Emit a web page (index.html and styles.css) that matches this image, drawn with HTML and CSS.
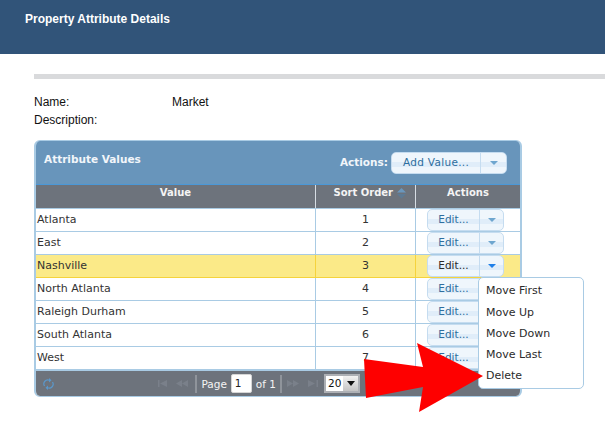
FILE: index.html
```html
<!DOCTYPE html>
<html lang="en">
<head>
  <meta charset="UTF-8">
  <title>Property Attribute Details</title>
  <link rel="stylesheet" href="styles.css">
</head>
<body>
  <!-- Header -->
  <header class="page-header">Property Attribute Details</header>

  <main class="content">
    <div class="divider"></div>

    <div class="field"><span class="field-label">Name:</span><span>Market</span></div>
    <div class="field"><span class="field-label">Description:</span></div>

    <!-- Grid -->
    <section class="panel">
      <div class="panel-title">
        <h2>Attribute Values</h2>
        <div class="panel-actions">
          <span>Actions:</span>
          <div class="split-btn add-btn"><span class="btn-main">Add Value...</span><span class="btn-arrow"><i class="caret"></i></span></div>
        </div>
      </div>

      <div class="row head">
        <div class="cell col-value center">Value</div>
        <div class="cell col-sort center sort-head">Sort Order
          <svg class="sort-icon" width="9" height="11" viewBox="0 0 9 11"><path d="M4.500 0 9 4.500H0z" fill="#6a97bd"/><path d="M0 6h9l-4.500 4.500z" fill="#5d7a94"/></svg>
        </div>
        <div class="cell col-actions center">Actions</div>
      </div>

      <div class="row">
        <div class="cell col-value">Atlanta</div>
        <div class="cell col-sort center">1</div>
        <div class="cell col-actions"><div class="split-btn"><span class="btn-main">Edit...</span><span class="btn-arrow"><i class="caret"></i></span></div></div>
      </div>
      <div class="row">
        <div class="cell col-value">East</div>
        <div class="cell col-sort center">2</div>
        <div class="cell col-actions"><div class="split-btn"><span class="btn-main">Edit...</span><span class="btn-arrow"><i class="caret"></i></span></div></div>
      </div>
      <div class="row selected">
        <div class="cell col-value">Nashville</div>
        <div class="cell col-sort center">3</div>
        <div class="cell col-actions"><div class="split-btn open"><span class="btn-main">Edit...</span><span class="btn-arrow"><i class="caret"></i></span></div></div>
      </div>
      <div class="row">
        <div class="cell col-value">North Atlanta</div>
        <div class="cell col-sort center">4</div>
        <div class="cell col-actions"><div class="split-btn"><span class="btn-main">Edit...</span><span class="btn-arrow"><i class="caret"></i></span></div></div>
      </div>
      <div class="row">
        <div class="cell col-value">Raleigh Durham</div>
        <div class="cell col-sort center">5</div>
        <div class="cell col-actions"><div class="split-btn"><span class="btn-main">Edit...</span><span class="btn-arrow"><i class="caret"></i></span></div></div>
      </div>
      <div class="row">
        <div class="cell col-value">South Atlanta</div>
        <div class="cell col-sort center">6</div>
        <div class="cell col-actions"><div class="split-btn"><span class="btn-main">Edit...</span><span class="btn-arrow"><i class="caret"></i></span></div></div>
      </div>
      <div class="row last">
        <div class="cell col-value">West</div>
        <div class="cell col-sort center">7</div>
        <div class="cell col-actions"><div class="split-btn"><span class="btn-main">Edit...</span><span class="btn-arrow"><i class="caret"></i></span></div></div>
      </div>

      <!-- Pager -->
      <div class="pager">
        <svg class="refresh" width="11" height="12" viewBox="0 0 11 12" fill="none" stroke="#5a98cc" stroke-width="1.200"><path d="M1.500 8A4 4 0 0 1 6.500 2.200"/><path d="M9.500 4A4 4 0 0 1 4.500 9.800"/><path d="M6 0v4.500L8.500 2.200zM5 12V7.500L2.500 9.800z" fill="#5a98cc" stroke="none"/></svg>
        <div class="pager-nav">
          <svg class="nav-icon first-icon" width="9" height="7" viewBox="0 0 9 7"><path d="M0 0h1.500v7H0zM9 0v7L2 3.500z"/></svg>
          <svg class="nav-icon prev-icon" width="12" height="7" viewBox="0 0 12 7"><path d="M6 0v7L0 3.500zM12 0v7L6 3.500z"/></svg>
          <span class="sep"></span>
          <span>Page</span>
          <span class="page-input">1</span>
          <span>of 1</span>
          <span class="sep"></span>
          <svg class="nav-icon next-icon" width="12" height="7" viewBox="0 0 12 7"><path d="M0 0v7l6-3.500zM6 0v7l6-3.500z"/></svg>
          <svg class="nav-icon last-icon" width="10" height="7" viewBox="0 0 10 7"><path d="M0 0v7l7-3.500zM8.500 0H10v7H8.500z"/></svg>
          <div class="page-size"><span>20</span><span class="size-btn"><i class="size-caret"></i></span></div>
        </div>
      </div>
    </section>
  </main>

  <!-- Dropdown menu -->
  <ul class="menu">
    <li>Move First</li>
    <li>Move Up</li>
    <li>Move Down</li>
    <li>Move Last</li>
    <li>Delete</li>
  </ul>

  <!-- Red arrow annotation -->
  <svg class="callout" width="120" height="70" viewBox="0 0 120 70"><path d="M0 16 59 24 53 0 119 33 55 69 59 44 2 55z" fill="#fe0000"/></svg>
</body>
</html>
```

FILE: styles.css
```css
html, body {
  margin: 0;
  padding: 0;
  background: #fff;
  overflow: hidden;
}

body {
  width: 605px;
  height: 423px;
  position: relative;
  font-family: "Liberation Sans", Arial, sans-serif;
  font-size: 12px;
  color: #111;
}

.page-header {
  height: 54px;
  box-sizing: border-box;
  padding: 12px 0 0 25px;
  background-color: #315479;
  color: #fff;
  font-weight: bold;
  line-height: 14px;
}

.content {
  padding: 20px 0 0 34px;
}

.divider {
  height: 5px;
  background-color: #d9dadc;
  margin-bottom: 14px;
}

.field {
  display: flex;
  height: 18px;
  line-height: 18px;
}

.field-label {
  width: 138px;
}

/* Grid panel */
.panel {
  width: 488px;
  height: 257px;
  box-sizing: border-box;
  margin-top: 11px;
  border: 1px solid #a9cbe4;
  border-width: 1px 2px;
  border-radius: 6px;
  overflow: hidden;
  font-family: "DejaVu Sans", Verdana, sans-serif;
  font-size: 11px;
}

.panel-title {
  height: 44px;
  box-sizing: border-box;
  display: flex;
  justify-content: space-between;
  padding: 11px 13px 0 8px;
  background-color: #6895bb;
  border-bottom: 1px solid #4a98d8;
  color: #f2f6fa;
  font-weight: bold;
  font-size: 10.500px;
}

.panel-title h2 {
  margin: 0;
  font-size: 10.500px;
  line-height: 14px;
}

.panel-actions {
  display: flex;
  gap: 3px;
  line-height: 20px;
}

.row {
  display: flex;
  height: 23px;
  box-sizing: border-box;
  border-bottom: 1px solid #a9cbe4;
  background: #fff;
  color: #333;
}

.row.head {
  height: 24px;
  background-color: #6d737c;
  color: #f4f4f4;
  font-size: 10px;
  font-weight: bold;
}

.row.selected {
  background-color: #fbea88;
  border-bottom-color: #f5d33c;
}

.row.last {
  border-bottom-width: 2px;
  height: 24px;
}

.cell {
  box-sizing: border-box;
  padding: 0 1px;
  line-height: 21px;
  border-right: 1px solid #a9cbe4;
  white-space: nowrap;
}

.selected .cell {
  border-right-color: #f5d33c;
}

.col-value { width: 280px; }
.col-sort { width: 100px; }
.col-actions { width: 104px; border-right: 0; padding: 0 0 0 11px; }
.center { text-align: center; }

.head .cell {
  line-height: 15px;
  border-right-color: #d6dde4;
}

.head .col-actions { padding: 0; }
.sort-head { padding-left: 9px; }

.sort-icon {
  vertical-align: -3px;
}

/* Split buttons */
.split-btn {
  display: flex;
  width: 77px;
  height: 22px;
  box-sizing: border-box;
  border: 1px solid #c5dcf0;
  border-radius: 5px;
  background: linear-gradient(#eff6fc 0 45%, #e0edf9 45% 70%, #eff6fc 70%);
  color: #2e6e9e;
  font-size: 10.500px;
  font-weight: normal;
  line-height: 19px;
}

.btn-main {
  width: 51px;
  text-align: center;
  border-right: 1px solid #c5dcf0;
}

.btn-arrow {
  flex: 1;
  display: flex;
  align-items: center;
  justify-content: center;
}

.caret {
  width: 0;
  height: 0;
  border-left: 4px solid transparent;
  border-right: 4px solid transparent;
  border-top: 4px solid #6ea6cf;
}

.open { color: #2b2b2b; }
.open .caret { border-top-color: #1f7fe8; }

.add-btn {
  width: 116px;
  letter-spacing: 0.300px;
}

.add-btn .btn-main { width: 88px; }

/* Pager */
.pager {
  height: 25px;
  display: flex;
  align-items: center;
  justify-content: space-between;
  padding: 0 0 0 7px;
  background-color: #6d737c;
  color: #f4f4f4;
  font-size: 10.500px;
}

.refresh {
  flex: none;
}

.pager-nav {
  display: flex;
  align-items: center;
  gap: 4px;
  margin-right: 160px;
}

.nav-icon {
  fill: #7a808a;
}

.first-icon { margin-right: 5px; }
.prev-icon { margin-right: 3px; }
.next-icon { margin: 0 5px 0 1px; }
.last-icon { margin-right: 2px; }

.sep {
  width: 2px;
  height: 18px;
  background-color: #8f949b;
}

.page-input {
  width: 21px;
  height: 19px;
  box-sizing: border-box;
  padding-left: 3px;
  background: #fff;
  border: 1px solid #d6d6d6;
  border-radius: 2px;
  color: #222;
  line-height: 17px;
}

.page-size {
  display: flex;
  width: 36px;
  height: 19px;
  box-sizing: border-box;
  background: #fff;
  border: 2px solid #adb0b5;
  color: #111;
  line-height: 15px;
  padding-left: 2px;
  justify-content: space-between;
}

.size-btn {
  width: 15px;
  display: flex;
  align-items: center;
  justify-content: center;
  background: linear-gradient(#f2f2f2, #c4c4c4);
}

.size-caret {
  border-left: 4px solid transparent;
  border-right: 4px solid transparent;
  border-top: 5px solid #111;
}

/* Menu over the grid */
.menu {
  position: absolute;
  left: 478px;
  top: 277px;
  width: 106px;
  height: 112px;
  box-sizing: border-box;
  margin: 0;
  padding: 2px 0 0 7px;
  list-style: none;
  background: #fff;
  border: 1px solid #a9cbe4;
  border-radius: 5px;
  font-family: "DejaVu Sans", Verdana, sans-serif;
  font-size: 11px;
  color: #2b2b2b;
}

.menu li {
  height: 21px;
  line-height: 21px;
}

.menu li:first-child {
  margin-bottom: 1px;
}

/* Arrow annotation */
.callout {
  position: absolute;
  left: 364px;
  top: 343px;
}
```
